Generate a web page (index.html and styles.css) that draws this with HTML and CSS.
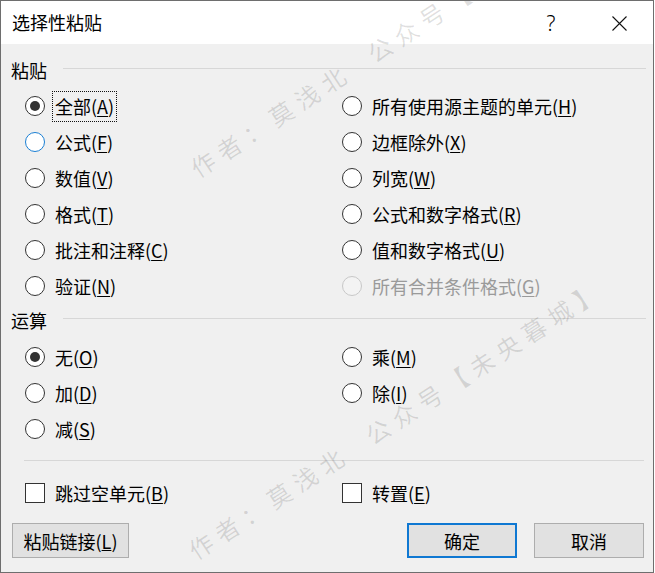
FILE: index.html
```html
<!DOCTYPE html>
<html lang="zh-CN">
<head>
<meta charset="utf-8">
<title>选择性粘贴</title>
<link rel="stylesheet" href="styles.css">
</head>
<body>
<div class="window">
  <div class="titlebar">
    <div class="title">选择性粘贴</div>
    <div class="tb-btn help">?</div>
    <div class="tb-btn close">
      <svg width="15" height="15" viewBox="0 0 15 15"><path d="M0.5 0.5 L14.5 14.5 M14.5 0.5 L0.5 14.5" stroke="#111" stroke-width="1.1" fill="none"/></svg>
    </div>
  </div>
  <div class="content">
    <div class="group-label"><span>粘贴</span><i class="rule"></i></div>
    <div class="options paste">
      <div class="opt"><span class="radio checked"></span><span class="text focus">全部(<u>A</u>)</span></div>
      <div class="opt"><span class="radio"></span><span class="text">所有使用源主题的单元(<u>H</u>)</span></div>
      <div class="opt"><span class="radio hover"></span><span class="text">公式(<u>F</u>)</span></div>
      <div class="opt"><span class="radio"></span><span class="text">边框除外(<u>X</u>)</span></div>
      <div class="opt"><span class="radio"></span><span class="text">数值(<u>V</u>)</span></div>
      <div class="opt"><span class="radio"></span><span class="text">列宽(<u>W</u>)</span></div>
      <div class="opt"><span class="radio"></span><span class="text">格式(<u>T</u>)</span></div>
      <div class="opt"><span class="radio"></span><span class="text">公式和数字格式(<u>R</u>)</span></div>
      <div class="opt"><span class="radio"></span><span class="text">批注和注释(<u>C</u>)</span></div>
      <div class="opt"><span class="radio"></span><span class="text">值和数字格式(<u>U</u>)</span></div>
      <div class="opt"><span class="radio"></span><span class="text">验证(<u>N</u>)</span></div>
      <div class="opt disabled"><span class="radio"></span><span class="text">所有合并条件格式(<u>G</u>)</span></div>
    </div>
    <div class="group-label op-label"><span>运算</span><i class="rule"></i></div>
    <div class="options ops">
      <div class="opt"><span class="radio checked"></span><span class="text">无(<u>O</u>)</span></div>
      <div class="opt"><span class="radio"></span><span class="text">乘(<u>M</u>)</span></div>
      <div class="opt"><span class="radio"></span><span class="text">加(<u>D</u>)</span></div>
      <div class="opt"><span class="radio"></span><span class="text">除(<u>I</u>)</span></div>
      <div class="opt"><span class="radio"></span><span class="text">减(<u>S</u>)</span></div>
    </div>
    <div class="separator"></div>
    <div class="options checks">
      <div class="opt"><span class="checkbox"></span><span class="text">跳过空单元(<u>B</u>)</span></div>
      <div class="opt"><span class="checkbox"></span><span class="text">转置(<u>E</u>)</span></div>
    </div>
    <div class="buttons">
      <button class="btn link">粘贴链接(<u>L</u>)</button>
      <div class="spacer"></div>
      <button class="btn ok">确定</button>
      <button class="btn cancel">取消</button>
    </div>
  </div>
  <span class="wm wm1">作者：莫浅北&nbsp; 公众号【未央暮城】</span>
  <span class="wm wm2">作者：莫浅北&nbsp; 公众号【未央暮城】</span>
</div>
</body>
</html>
```
FILE: styles.css
```css
* { box-sizing: border-box; }
html, body {
  margin: 0;
  padding: 0;
  background: #ffffff;
}
body {
  font-family: "Noto Sans CJK SC", "Noto Sans", sans-serif;
  font-size: 18px;
  color: #000;
}
.window {
  position: relative;
  width: 654px;
  height: 573px;
  border: 1px solid #6e6e6e;
  background: #f0f0f0;
  overflow: hidden;
}
.titlebar {
  display: flex;
  align-items: center;
  height: 43px;
  background: #ffffff;
}
.title {
  flex: 1;
  padding-left: 11px;
  line-height: 43px;
}
.tb-btn {
  width: 68px;
  height: 43px;
  display: flex;
  align-items: center;
  justify-content: center;
}
.help {
  font-family: "Noto Sans", sans-serif;
  font-size: 21px;
  font-weight: 300;
}
.close svg { display: block; margin-top: 1px; }

.content {
  padding: 14px 7px 0 10px;
}
.group-label {
  display: flex;
  align-items: center;
  height: 24px;
  line-height: 24px;
}
.group-label .rule {
  flex: 1;
  height: 1px;
  background: #d7d7d7;
  margin-left: 16px;
  margin-top: -3px;
}
.op-label { margin-top: 4px; }

.options {
  display: grid;
  grid-template-columns: 317px 1fr;
  grid-auto-rows: 36px;
  padding-left: 14px;
}
.paste { margin-top: 6px; }
.ops { margin-top: 7px; }
.opt {
  display: flex;
  align-items: center;
}
.radio {
  width: 20px;
  height: 20px;
  border: 1px solid #333;
  border-radius: 50%;
  background: #fff;
  margin-right: 8px;
  flex: none;
  display: flex;
  align-items: center;
  justify-content: center;
}
.radio.checked::after {
  content: "";
  width: 10px;
  height: 10px;
  border-radius: 50%;
  background: #333;
}
.radio.hover { border-color: #1a7fd4; }
.text {
  display: inline-block;
  line-height: 29px;
  padding: 0 2px;
  white-space: nowrap;
}
.text u { text-underline-offset: 2px; }
.focus { outline: 1px dotted #111; }
.disabled .radio { border-color: #c8c8c8; background: #f3f3f3; }
.disabled .text { color: #9a9a9a; }

.separator {
  height: 1px;
  background: #d7d7d7;
  margin: 13px 2px 0 13px;
}
.checks { margin-top: 14px; }
.checkbox {
  width: 20px;
  height: 20px;
  border: 1px solid #333;
  background: #fff;
  margin-right: 8px;
  flex: none;
}

.buttons {
  display: flex;
  margin-top: 12px;
  padding-left: 1px;
  padding-right: 2px;
}
.spacer { flex: 1; }
.btn {
  font-family: inherit;
  font-size: 18px;
  color: #000;
  height: 35px;
  padding: 0;
  background: #e1e1e1;
  border: 1px solid #adadad;
  border-radius: 0;
  line-height: 1;
}
.link { width: 117px; }
.ok { width: 110px; border: 2px solid #0f78d2; }
.cancel { width: 110px; margin-left: 17px; }

.wm {
  position: absolute;
  left: 0;
  top: 0;
  white-space: nowrap;
  font-size: 24px;
  line-height: 30px;
  letter-spacing: 7px;
  color: rgba(0, 0, 0, 0.12);
  transform-origin: 0 100%;
  transform: rotate(-33deg);
  pointer-events: none;
}
.wm1 { left: 200px; top: 152px; }
.wm2 { left: 198px; top: 534px; }
```
